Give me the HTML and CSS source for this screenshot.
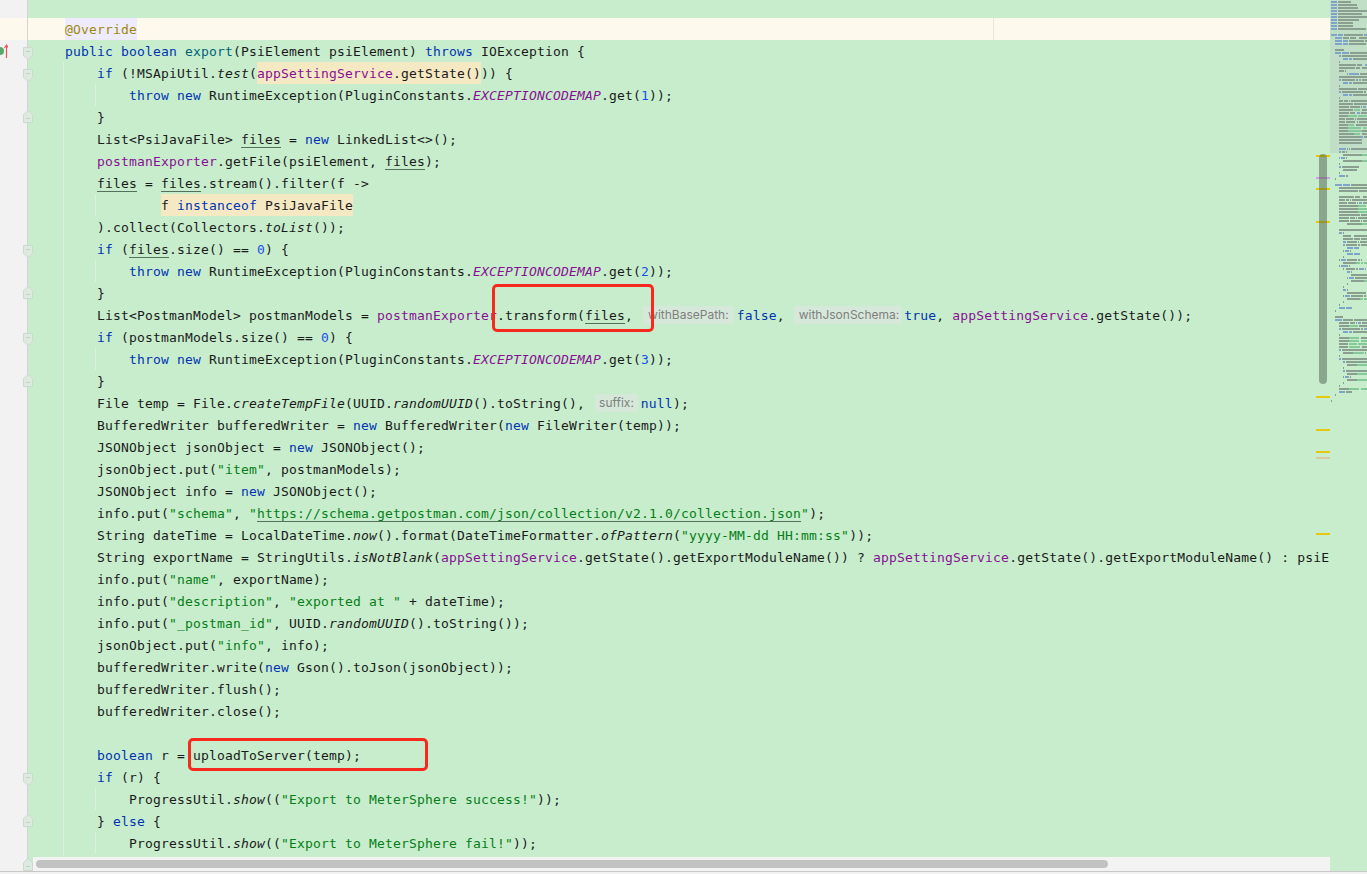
FILE: index.html
```html
<!DOCTYPE html>
<html lang="en">

<head>
    <meta charset="UTF-8">
    <meta name="viewport" content="width=device-width, initial-scale=1.0">
    <title>Document</title>
    <link rel="stylesheet" href="styles.css">
</head>

<body>
    <svg class="defs">
        <symbol id="fold-open" viewBox="0 0 10 13">
            <path d="M.5.5h9v8L5 12.5.5 8.5z" fill="#dcebe0" stroke="#d2d6d2" />
            <path d="M3 4.5h4" stroke="#c4cfc6" />
        </symbol>
        <symbol id="fold-end" viewBox="0 0 10 13">
            <path d="M.5 12.5h9v-8L5 .5.5 4.500z" fill="#dcebe0" stroke="#d2d6d2" />
            <path d="M3 8.500h4" stroke="#c4cfc6" />
        </symbol>
    </svg>

    <div class="ide">
        <div class="editor">
            <div class="line spacer"><div class="gut"></div></div>

            <div class="line current"><div class="gut"></div><div class="code flat">    <span class="ann">@Override</span></div></div>
            <div class="line"><div class="gut"><svg class="mark" viewBox="0 0 8 14"><circle cx="0" cy="7" r="4" fill="#59a869" /><path d="M6.500 14V1M4.500 4l2-3 2 3" fill="none" stroke="#e45a5a" stroke-width="1.200" /></svg><svg class="fold open"><use href="#fold-open" /></svg></div><div class="code flat">    <span class="k">public boolean</span> <span class="m">export</span>(PsiElement psiElement) <span class="k">throws</span> IOException {</div></div>
            <div class="line"><div class="gut"><svg class="fold open"><use href="#fold-open" /></svg></div><div class="code">        <span class="k">if</span> (!MSApiUtil.<i>test</i>(<span class="hl"><span class="f">appSettingService</span>.getState()</span>)) {</div></div>
            <div class="line"><div class="gut"></div><div class="code deep">            <span class="k">throw new</span> RuntimeException(PluginConstants.<i class="f">EXCEPTIONCODEMAP</i>.get(<span class="n">1</span>));</div></div>
            <div class="line"><div class="gut"><svg class="fold end"><use href="#fold-end" /></svg></div><div class="code">        }</div></div>
            <div class="line"><div class="gut"></div><div class="code">        List&lt;PsiJavaFile&gt; <span class="u">files</span> = <span class="k">new</span> LinkedList&lt;&gt;();</div></div>
            <div class="line"><div class="gut"></div><div class="code">        <span class="f">postmanExporter</span>.getFile(psiElement, <span class="u">files</span>);</div></div>
            <div class="line"><div class="gut"></div><div class="code">        <span class="u">files</span> = <span class="u">files</span>.stream().filter(f -&gt;</div></div>
            <div class="line"><div class="gut"></div><div class="code deep">                <span class="hl">f <span class="k">instanceof</span> PsiJavaFile</span></div></div>
            <div class="line"><div class="gut"></div><div class="code">        ).collect(Collectors.<i>toList</i>());</div></div>
            <div class="line"><div class="gut"><svg class="fold open"><use href="#fold-open" /></svg></div><div class="code">        <span class="k">if</span> (<span class="u">files</span>.size() == <span class="n">0</span>) {</div></div>
            <div class="line"><div class="gut"></div><div class="code deep">            <span class="k">throw new</span> RuntimeException(PluginConstants.<i class="f">EXCEPTIONCODEMAP</i>.get(<span class="n">2</span>));</div></div>
            <div class="line"><div class="gut"><svg class="fold end"><use href="#fold-end" /></svg></div><div class="code">        }</div></div>
            <div class="line"><div class="gut"></div><div class="code">        List&lt;PostmanModel&gt; postmanModels = <span class="f">postmanExporter</span>.transform(<span class="u">files</span>, <span class="hint">withBasePath:</span><span class="k">false</span>, <span class="hint hint-wide">withJsonSchema:</span><span class="k">true</span>, <span class="f">appSettingService</span>.getState());</div></div>
            <div class="line"><div class="gut"><svg class="fold open"><use href="#fold-open" /></svg></div><div class="code">        <span class="k">if</span> (postmanModels.size() == <span class="n">0</span>) {</div></div>
            <div class="line"><div class="gut"></div><div class="code deep">            <span class="k">throw new</span> RuntimeException(PluginConstants.<i class="f">EXCEPTIONCODEMAP</i>.get(<span class="n">3</span>));</div></div>
            <div class="line"><div class="gut"><svg class="fold end"><use href="#fold-end" /></svg></div><div class="code">        }</div></div>
            <div class="line"><div class="gut"></div><div class="code">        File temp = File.<i>createTempFile</i>(UUID.<i>randomUUID</i>().toString(), <span class="hint hint-short">suffix:</span><span class="k">null</span>);</div></div>
            <div class="line"><div class="gut"></div><div class="code">        BufferedWriter bufferedWriter = <span class="k">new</span> BufferedWriter(<span class="k">new</span> FileWriter(temp));</div></div>
            <div class="line"><div class="gut"></div><div class="code">        JSONObject jsonObject = <span class="k">new</span> JSONObject();</div></div>
            <div class="line"><div class="gut"></div><div class="code">        jsonObject.put(<span class="s">"item"</span>, postmanModels);</div></div>
            <div class="line"><div class="gut"></div><div class="code">        JSONObject info = <span class="k">new</span> JSONObject();</div></div>
            <div class="line"><div class="gut"></div><div class="code">        info.put(<span class="s">"schema"</span>, <span class="s">"<span class="url">https://schema.getpostman.com/json/collection/v2.1.0/collection.json</span>"</span>);</div></div>
            <div class="line"><div class="gut"></div><div class="code">        String dateTime = LocalDateTime.<i>now</i>().format(DateTimeFormatter.<i>ofPattern</i>(<span class="s">"yyyy-MM-dd HH:mm:ss"</span>));</div></div>
            <div class="line"><div class="gut"></div><div class="code">        String exportName = StringUtils.<i>isNotBlank</i>(<span class="f">appSettingService</span>.getState().getExportModuleName()) ? <span class="f">appSettingService</span>.getState().getExportModuleName() : psiE</div></div>
            <div class="line"><div class="gut"></div><div class="code">        info.put(<span class="s">"name"</span>, exportName);</div></div>
            <div class="line"><div class="gut"></div><div class="code">        info.put(<span class="s">"description"</span>, <span class="s">"exported at "</span> + dateTime);</div></div>
            <div class="line"><div class="gut"></div><div class="code">        info.put(<span class="s">"_postman_id"</span>, UUID.<i>randomUUID</i>().toString());</div></div>
            <div class="line"><div class="gut"></div><div class="code">        jsonObject.put(<span class="s">"info"</span>, info);</div></div>
            <div class="line"><div class="gut"></div><div class="code">        bufferedWriter.write(<span class="k">new</span> Gson().toJson(jsonObject));</div></div>
            <div class="line"><div class="gut"></div><div class="code">        bufferedWriter.flush();</div></div>
            <div class="line"><div class="gut"></div><div class="code">        bufferedWriter.close();</div></div>
            <div class="line"><div class="gut"></div><div class="code"> </div></div>
            <div class="line"><div class="gut"></div><div class="code">        <span class="k">boolean</span> r = uploadToServer(temp);</div></div>
            <div class="line"><div class="gut"><svg class="fold open"><use href="#fold-open" /></svg></div><div class="code">        <span class="k">if</span> (r) {</div></div>
            <div class="line"><div class="gut"></div><div class="code deep">            ProgressUtil.<i>show</i>((<span class="s">"Export to MeterSphere success!"</span>));</div></div>
            <div class="line"><div class="gut"><svg class="fold end"><use href="#fold-end" /></svg></div><div class="code">        } <span class="k">else</span> {</div></div>
            <div class="line"><div class="gut"></div><div class="code deep">            ProgressUtil.<i>show</i>((<span class="s">"Export to MeterSphere fail!"</span>));</div></div>
            <div class="line"><div class="gut"><svg class="fold end"><use href="#fold-end" /></svg></div><div class="code"></div></div>

            <!-- red boxes drawn on the screenshot -->
            <div class="callout callout-transform"></div>
            <div class="callout callout-upload"></div>

            <!-- error stripe and scrollbar -->
            <svg class="stripe" viewBox="0 0 14 874">
                <g fill="#e8c80e">
                    <rect y="155" width="14" height="2" />
                    <rect y="188" width="14" height="2" />
                    <rect y="221" width="14" height="2" />
                    <rect y="396" width="14" height="2" />
                    <rect y="429" width="14" height="2" />
                    <rect y="451" width="14" height="2" />
                    <rect y="533" width="14" height="2" />
                </g>
                <rect y="177" width="14" height="2" fill="#cf9fe0" />
                <rect y="457" width="14" height="2" fill="#dcc9a0" />
                <rect x="3" y="154" width="8" height="230" rx="4" fill="#465a46" fill-opacity=".47" />
            </svg>

            <div class="hscroll"><div class="hthumb"></div></div>
        </div>

        <svg class="minimap" viewBox="0 0 37 871">
            <rect width="37" height="153" fill="#c0dfc6" />
            <path class="mm-blue" d="M1 2H7M1 5H7M1 8H7M1 11H7M1 14H7M1 17H7M1 20H7M1 23H7M1 26H7M1 29H7M1 35H7M8 35H13M34 35H37M5 38H12M5 41H12M13 41H18M5 44H12M13 44H18M5 53H11M12 53H19M9 56H11M13 59H18M19 59H22M35 65H37M19 74H29M9 80H11M29 80H31M13 83H18M19 83H22M9 92H11M13 95H18M19 95H22M33 107H36M27 113H30M30 137H33M9 149H16M9 152H11M9 158H10M11 158H15M9 167H11M9 176H15M5 185H12M13 185H20M29 203H32M9 233H12M13 242H16M13 245H15M17 248H23M24 248H29M15 251H19M17 254H23M24 254H30M11 260H16M11 266H18M29 269H34M17 272H20M19 278H24M13 290H16M15 296H20M9 308H15M16 308H22M5 320H12M28 323H31M9 329H11M34 329H37M13 332H18M19 332H22M9 350H11M9 359H11M13 362H15M13 371H15M15 377H19M9 392H15" />
            <path class="mm-gray" d="M8 2H21M8 5H27M8 8H28M8 11H37M8 14H32M8 17H37M8 20H29M8 23H23M8 26H23M8 29H36M14 35H33M13 38H19M20 38H26M29 38H37M19 41H34M35 41H37M19 44H36M5 50H14M20 53H37M12 56H37M23 59H37M9 62H10M9 65H26M27 65H32M9 68H25M26 68H30M32 68H37M9 71H14M15 71H16M17 74H18M30 74H37M9 77H37M12 80H25M26 80H28M32 80H37M23 83H37M9 86H10M9 89H27M28 89H37M12 92H33M34 92H36M23 95H37M9 98H10M9 101H13M14 101H18M19 101H20M21 101H37M9 104H23M24 104H37M9 107H19M20 107H30M31 107H32M9 110H23M32 110H37M9 113H19M20 113H25M31 113H37M9 116H18M9 119H15M16 119H24M25 119H26M27 119H37M9 122H15M16 122H25M27 122H28M29 122H37M9 125H18M26 125H37M9 128H18M9 131H18M32 131H37M9 134H24M32 134H37M9 137H30M34 137H37M9 140H32M9 143H32M17 149H18M19 149H20M21 149H37M12 152H15M16 152H17M13 155H32M16 158H17M13 161H32M9 164H10M12 167H29M13 170H27M9 173H10M16 176H18M5 179H6M21 185H37M9 188H37M9 191H28M29 191H37M9 197H24M25 197H30M33 197H37M9 200H15M16 200H19M20 200H21M22 200H37M9 203H17M18 203H26M27 203H28M33 203H37M9 206H28M9 209H28M9 212H28M9 215H30M31 215H37M9 218H19M20 218H25M26 218H27M28 218H37M9 221H19M20 221H30M31 221H32M33 221H37M17 224H32M9 230H37M13 233H14M13 236H21M24 236H37M13 239H23M24 239H30M31 239H37M17 242H27M28 242H29M30 242H37M16 245H27M28 245H30M31 245H37M13 251H14M20 251H21M13 257H14M9 260H10M17 260H27M28 260H30M31 260H32M13 263H26M9 266H10M19 266H20M13 269H14M16 269H25M26 269H28M35 269H36M21 272H22M21 275H37M17 278H18M25 278H37M21 281H34M17 284H18M13 287H14M17 290H18M17 293H36M13 296H14M21 296H33M34 296H36M17 299H30M13 302H14M9 305H10M5 311H6M5 317H13M13 320H23M24 320H37M9 323H19M20 323H25M26 323H27M32 323H37M9 326H19M29 326H37M12 329H30M31 329H33M23 332H37M9 335H10M9 338H19M31 338H37M9 341H19M9 344H18M9 347H18M32 347H37M12 350H37M13 353H23M35 353H36M9 356H10M12 359H37M16 362H37M17 365H27M13 368H14M16 371H37M17 374H27M13 377H14M20 377H21M17 380H27M13 383H14M9 386H10M9 389H19M31 389H37M16 392H22M5 395H6M1 401H2" />
            <path class="mm-green" d="M24 110H30M18 116H27M28 116H37M18 125H24M18 128H31M33 128H37M18 131H32M24 134H30M32 155H37M32 161H37M28 206H36M28 209H37M28 212H37M32 224H37M26 263H30M31 263H33M34 263H37M34 281H37M30 299H33M34 299H37M19 326H28M19 338H29M19 341H29M31 341H37M19 344H27M28 344H37M19 347H30M23 353H34M27 365H37M27 374H37M27 380H37M19 389H29M31 389H37" />
        </svg>
    </div>
    <div class="bottom"></div>
</body>

</html>
```

FILE: styles.css
```css
body {
    margin: 0;
    height: 874px;
    overflow: hidden;
    background-color: #c7edcc;
}

.defs {
    display: none;
}

.ide {
    display: flex;
    height: 871px;
}

.editor {
    position: relative;
    flex: 1;
    min-width: 0;
    overflow: hidden;
    font-family: "DejaVu Sans Mono", "Liberation Mono", monospace;
    font-size: 13px;
    letter-spacing: 0.174px;
    color: #1a1a1a;
}

.line {
    display: flex;
    height: 22px;
    line-height: 24px;
}

.spacer {
    height: 18px;
}

.current {
    background-color: #fdf9ec;
    background-image: linear-gradient(#e8e6da, #e8e6da);
    background-size: 1px 100%;
    background-position: 993px 0;
    background-repeat: no-repeat;
}

.gut {
    display: flex;
    flex: none;
    align-items: flex-start;
    box-sizing: border-box;
    width: 28px;
    background-color: #f2f2f2;
    border-right: 1px solid #d4d4d4;
}

.current .gut {
    background-color: #fdf9ec;
}

.mark {
    width: 8px;
    height: 14px;
    margin-top: 4px;
    overflow: hidden;
}

.fold {
    flex: none;
    width: 10px;
    height: 13px;
    margin-left: auto;
    margin-right: -6px;
}

.fold.open {
    margin-top: 7px;
}

.fold.end {
    margin-top: 4px;
}

.code {
    flex: 1;
    min-width: 0;
    padding-left: 5px;
    white-space: pre;
    background-image: linear-gradient(#dcefe0, #dcefe0);
    background-size: 1px 100%;
    background-position: 35px 0;
    background-repeat: no-repeat;
}

.code.flat {
    background-image: none;
}

.code.deep {
    background-image: linear-gradient(#dcefe0, #dcefe0), linear-gradient(#dcefe0, #dcefe0);
    background-size: 1px 100%, 1px 100%;
    background-position: 35px 0, 67px 0;
    background-repeat: no-repeat;
}

.k {
    color: #0033b3;
}

.m {
    color: #00627a;
}

.f {
    color: #871094;
}

.s {
    color: #067d17;
}

.n {
    color: #1750eb;
}

.ann {
    display: inline-block;
    height: 22px;
    color: #9e880d;
    background-color: #edebfc;
}

.u,
.url {
    text-decoration: underline;
    text-decoration-thickness: 1px;
    text-decoration-color: #55705c;
    text-underline-offset: 3px;
}

.hl {
    display: inline-block;
    height: 22px;
    background-color: #f5e9c4;
}

.hint {
    display: inline-block;
    height: 18px;
    line-height: 18px;
    margin: 0 3px 0 2px;
    padding: 0 5px;
    vertical-align: 1px;
    border-radius: 3px;
    background-color: #d6e8d9;
    color: #7f7f7f;
    font-family: Inter, "Liberation Sans", sans-serif;
    font-size: 12px;
    letter-spacing: 0;
}

.hint-wide {
    margin: 0 2px 0 1px;
    padding: 0 3px 0 5px;
}

.hint-short {
    padding: 0 4px;
}

.callout {
    position: absolute;
    box-sizing: border-box;
    border: 3px solid #f7291f;
    border-radius: 5px;
}

.callout-transform {
    left: 492px;
    top: 284px;
    width: 162px;
    height: 48px;
}

.callout-upload {
    left: 188px;
    top: 738px;
    width: 240px;
    height: 33px;
}

.stripe {
    position: absolute;
    top: 0;
    right: 0;
    width: 14px;
    height: 874px;
}

.hscroll {
    position: absolute;
    left: 33px;
    right: 0;
    bottom: 0;
    height: 14px;
    background-color: #f3f3f3;
}

.hthumb {
    width: 1072px;
    height: 8px;
    margin: 3px 0 0 3px;
    border-radius: 4px;
    background-color: #c2c2c2;
}

.minimap {
    flex: none;
    width: 37px;
    height: 871px;
    fill: none;
    shape-rendering: crispEdges;
}

.minimap path {
    stroke-width: 2;
}

.mm-gray {
    stroke: #8a9f8f;
}

.mm-blue {
    stroke: #7ea5c9;
}

.mm-green {
    stroke: #86c998;
}

.bottom {
    height: 2px;
    background-color: #f2f2f2;
    border-top: 1px solid #c8c8c8;
}
```
